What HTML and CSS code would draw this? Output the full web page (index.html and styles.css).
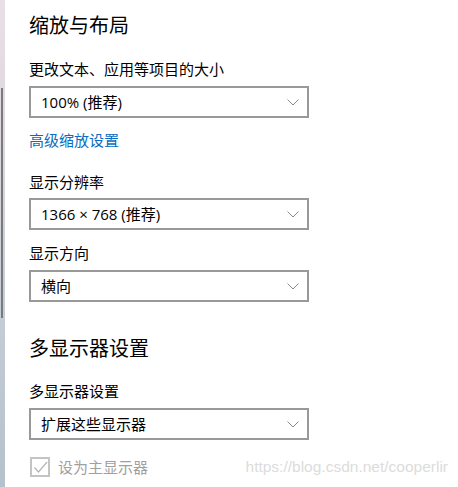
FILE: index.html
```html
<!DOCTYPE html>
<html lang="zh-CN">
<head>
<meta charset="utf-8">
<title>缩放与布局</title>
<link rel="stylesheet" href="styles.css">
</head>
<body>
<div class="page">
  <div class="strip"><div class="thumb"></div></div>
  <main class="content">
    <h2 class="heading first">缩放与布局</h2>
    <div class="label l1">更改文本、应用等项目的大小</div>
    <div class="select">
      <span class="value">100% (推荐)</span>
      <svg class="chev" width="12" height="7" viewBox="0 0 12 7"><polyline points="0.5,0.5 6,6 11.5,0.5" fill="none" stroke="#8a8a8a" stroke-width="1"/></svg>
    </div>
    <a class="link" href="#">高级缩放设置</a>
    <div class="label l2">显示分辨率</div>
    <div class="select s2">
      <span class="value">1366 × 768 (推荐)</span>
      <svg class="chev" width="12" height="7" viewBox="0 0 12 7"><polyline points="0.5,0.5 6,6 11.5,0.5" fill="none" stroke="#8a8a8a" stroke-width="1"/></svg>
    </div>
    <div class="label l3">显示方向</div>
    <div class="select">
      <span class="value">横向</span>
      <svg class="chev" width="12" height="7" viewBox="0 0 12 7"><polyline points="0.5,0.5 6,6 11.5,0.5" fill="none" stroke="#8a8a8a" stroke-width="1"/></svg>
    </div>
    <h2 class="heading second">多显示器设置</h2>
    <div class="label l4">多显示器设置</div>
    <div class="select">
      <span class="value">扩展这些显示器</span>
      <svg class="chev" width="12" height="7" viewBox="0 0 12 7"><polyline points="0.5,0.5 6,6 11.5,0.5" fill="none" stroke="#8a8a8a" stroke-width="1"/></svg>
    </div>
    <div class="check-row">
      <span class="checkbox">
        <svg width="15" height="15" viewBox="0 0 15 15"><polyline points="1.5,7.5 5.5,12 14,2" fill="none" stroke="#b4b4b4" stroke-width="1.2"/></svg>
      </span>
      <span class="check-label">设为主显示器</span>
      <span class="watermark">https://blog.csdn.net/cooperlir</span>
    </div>
  </main>
</div>
</body>
</html>
```

FILE: styles.css
```css
* { box-sizing: border-box; }
html, body { margin: 0; padding: 0; background: #fff; }
body {
  font-family: "Noto Sans CJK SC", "Noto Sans", sans-serif;
  color: #000;
  width: 458px;
  height: 487px;
  overflow: hidden;
}
.page {
  display: flex;
  height: 487px;
}
.strip {
  position: relative;
  width: 5px;
  flex: none;
  background: linear-gradient(to bottom, #e8e0e5 0%, #d9d6dd 35%, #c6ced7 60%, #b5c1cb 100%);
}
.thumb {
  position: absolute;
  left: 1px;
  top: 88px;
  width: 2px;
  height: 230px;
  background: #7a7a7a;
}
.content {
  flex: 1;
  padding-left: 24px;
  padding-right: 10px;
  display: flex;
  flex-direction: column;
  align-items: flex-start;
}
.heading {
  margin: 0;
  font-size: 20px;
  font-weight: normal;
  line-height: 28px;
  height: 28px;
}
.heading.first { margin-top: 11px; }
.heading.second { margin-top: 32px; }
.label {
  font-size: 15px;
  line-height: 20px;
  height: 20px;
}
.l1 { margin-top: 20px; }
.l2 { margin-top: 22px; }
.l3 { margin-top: 13px; }
.l4 { margin-top: 19px; }
.select {
  margin-top: 7px;
  width: 280px;
  height: 32px;
  border: 2px solid #999;
  display: flex;
  align-items: center;
  justify-content: space-between;
  padding: 0 8px 0 10px;
}
.select.s2 { margin-top: 6px; }
.value {
  font-family: "Open Sans", "Noto Sans CJK SC", sans-serif;
  font-size: 15px;
  line-height: 20px;
}
.chev { display: block; }
.link {
  margin-top: 12px;
  font-size: 15px;
  line-height: 20px;
  height: 20px;
  color: #0a6dc1;
  text-decoration: none;
}
.check-row {
  margin-top: 16px;
  align-self: stretch;
  display: flex;
  align-items: center;
  height: 22px;
}
.checkbox {
  width: 20px;
  height: 20px;
  border: 2px solid #c4c4c4;
  display: flex;
  align-items: center;
  justify-content: center;
  margin-left: 1px;
}
.checkbox svg { display: block; }
.check-label {
  margin-left: 8px;
  font-size: 15px;
  line-height: 20px;
  color: #a0a0a0;
}
.watermark {
  margin-left: auto;
  font-family: "Liberation Sans", sans-serif;
  font-size: 15.5px;
  color: #dcdcdc;
  line-height: 20px;
}
```
